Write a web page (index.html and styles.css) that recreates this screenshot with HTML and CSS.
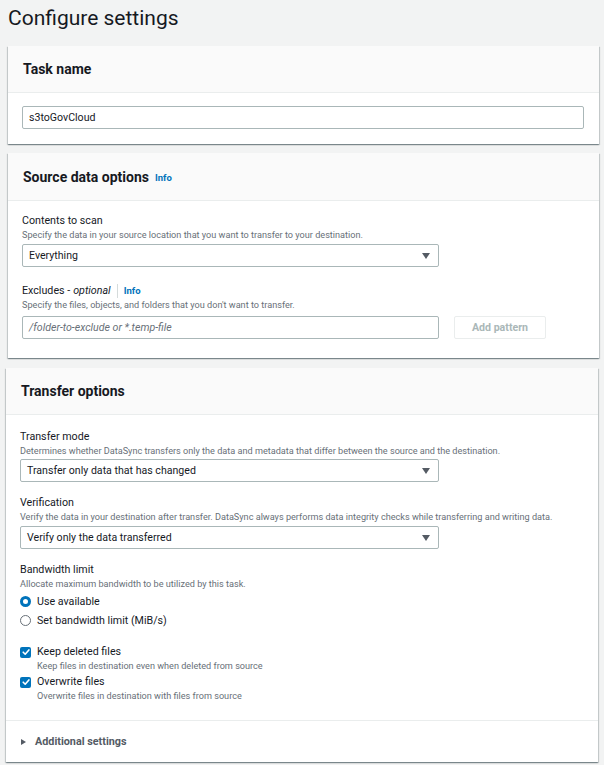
FILE: index.html
```html
<!DOCTYPE html>
<html>
<head>
<meta charset="utf-8">
<link rel="stylesheet" href="styles.css">
</head>
<body>
<div class="page">
  <h1 class="title">Configure settings</h1>

  <section class="card card-task">
    <header class="card-header"><h2>Task name</h2></header>
    <div class="card-body body-task">
      <div class="input full">s3toGovCloud</div>
    </div>
  </section>

  <section class="card card-source">
    <header class="card-header"><h2>Source data options</h2><span class="info">Info</span></header>
    <div class="card-body body-source">
      <div class="label">Contents to scan</div>
      <div class="desc">Specify the data in your source location that you want to transfer to your destination.</div>
      <div class="select">Everything<span class="caret"></span></div>

      <div class="label label-gap">Excludes - <em>optional</em><span class="sep"></span><span class="info info-sm">Info</span></div>
      <div class="desc">Specify the files, objects, and folders that you don't want to transfer.</div>
      <div class="row-input">
        <div class="input placeholder">/folder-to-exclude or *.temp-file</div>
        <div class="btn-disabled">Add pattern</div>
      </div>
    </div>
  </section>

  <section class="card card-transfer">
    <header class="card-header header-transfer"><h2>Transfer options</h2></header>
    <div class="card-body body-transfer">
      <div class="label">Transfer mode</div>
      <div class="desc">Determines whether DataSync transfers only the data and metadata that differ between the source and the destination.</div>
      <div class="select select-wide select-tight">Transfer only data that has changed<span class="caret"></span></div>

      <div class="label label-gap2">Verification</div>
      <div class="desc">Verify the data in your destination after transfer. DataSync always performs data integrity checks while transferring and writing data.</div>
      <div class="select select-wide">Verify only the data transferred<span class="caret"></span></div>

      <div class="label label-gap2">Bandwidth limit</div>
      <div class="desc">Allocate maximum bandwidth to be utilized by this task.</div>
      <div class="radios">
        <div class="radio-row"><span class="radio checked"></span><span class="opt">Use available</span></div>
        <div class="radio-row"><span class="radio"></span><span class="opt">Set bandwidth limit (MiB/s)</span></div>
      </div>

      <div class="checks">
        <div class="check-item">
          <div class="check-row"><span class="checkbox"><svg viewBox="0 0 10 10" width="10" height="10"><path d="M2.2 5.2 L4.2 7.2 L7.9 2.9" fill="none" stroke="#fff" stroke-width="1.6" stroke-linecap="round" stroke-linejoin="round"/></svg></span><span class="opt">Keep deleted files</span></div>
          <div class="check-desc">Keep files in destination even when deleted from source</div>
        </div>
        <div class="check-item second">
          <div class="check-row"><span class="checkbox"><svg viewBox="0 0 10 10" width="10" height="10"><path d="M2.2 5.2 L4.2 7.2 L7.9 2.9" fill="none" stroke="#fff" stroke-width="1.6" stroke-linecap="round" stroke-linejoin="round"/></svg></span><span class="opt">Overwrite files</span></div>
          <div class="check-desc">Overwrite files in destination with files from source</div>
        </div>
      </div>
    </div>
    <footer class="card-footer"><span class="tri"></span><span class="footer-text">Additional settings</span></footer>
  </section>
</div>
</body>
</html>
```
FILE: styles.css
```css
* { box-sizing: border-box; }
html, body { margin: 0; padding: 0; }
body {
  background: #f2f3f3;
  font-family: Roboto, "Liberation Sans", Arial, sans-serif;
  color: #16191f;
  width: 604px;
  height: 765px;
  overflow: hidden;
}
.page { padding-top: 4px; }
.title {
  margin: 0 0 0 8px;
  font-size: 21px;
  font-weight: 400;
  line-height: 28px;
  height: 42px;
  color: #16191f;
}
.card {
  background: #fff;
  box-shadow: 0 1px 1px 0 rgba(0,28,36,.3), 1px 1px 1px 0 rgba(0,28,36,.15), -1px 1px 1px 0 rgba(0,28,36,.15);
}
.card-task { margin: 0 5px 0 8px; }
.card-source { margin: 9px 5px 0 8px; }
.card-transfer { margin: 10px 6px 0 6px; }
.card-header {
  background: #fafafa;
  border-bottom: 1px solid #eaeded;
  height: 47px;
  display: flex;
  align-items: center;
  padding: 0 15px;
}
.card-source .card-header { height: 48px; }
.card-header h2 {
  margin: 0;
  font-size: 14px;
  font-weight: 700;
  line-height: 18px;
}
.info {
  color: #0073bb;
  font-weight: 700;
  font-size: 9.5px;
  margin-left: 6px;
  margin-top: 2px;
}
.card-body { padding: 0 15px 0 14px; }
.body-task { padding-top: 13px; padding-bottom: 15px; }
.body-source { padding-top: 12px; padding-bottom: 19px; }
.body-transfer { padding-top: 14px; padding-bottom: 18px; border-bottom: 1px solid #eaeded; }
.input, .select {
  height: 23px;
  border: 1px solid #aab7b8;
  border-radius: 2px;
  background: #fff;
  font-size: 10.6px;
  line-height: 21px;
  padding: 0 6px;
  color: #16191f;
}
.input.full { width: 100%; }
.select {
  width: 417px;
  margin-top: 3px;
  display: flex;
  justify-content: space-between;
  align-items: center;
}
.select-wide { width: 419px; }
.select-tight { margin-top: 2px; }
.caret {
  width: 0; height: 0;
  border-left: 4px solid transparent;
  border-right: 4px solid transparent;
  border-top: 6px solid #545b64;
  margin-right: 2px;
}
.label {
  font-size: 10.7px;
  line-height: 16px;
  display: flex;
  align-items: center;
}
.label em { font-style: italic; margin-left: 3px; }
.label-gap { margin-top: 16px; }
.label-gap2 { margin-top: 13px; }
.sep {
  display: inline-block;
  width: 1px;
  height: 14px;
  background: #d5dbdb;
  margin-left: 6px;
}
.info-sm { margin-left: 6px; margin-top: 0; }
.desc {
  font-size: 9.15px;
  line-height: 12px;
  color: #687078;
}
.row-input {
  display: flex;
  gap: 15px;
  margin-top: 5px;
}
.row-input .input { width: 417px; }
.placeholder { color: #687078; font-style: italic; }
.btn-disabled {
  width: 92px;
  height: 23px;
  border: 1px solid #eaeded;
  border-radius: 2px;
  color: #aab7b8;
  font-weight: 700;
  font-size: 10.6px;
  display: flex;
  align-items: center;
  justify-content: center;
}
.radios { margin-top: 2px; }
.radio-row {
  height: 19px;
  display: flex;
  align-items: center;
}
.radio {
  width: 11px; height: 11px;
  border-radius: 50%;
  border: 1px solid #687078;
  background: #fff;
}
.radio.checked { border: 3.5px solid #0073bb; }
.opt {
  font-size: 10.7px;
  margin-left: 6px;
  line-height: 16px;
}
.checks { margin-top: 14px; }
.check-item.second { margin-top: 2px; }
.check-row {
  display: flex;
  align-items: center;
  height: 16px;
}
.checkbox {
  width: 11px; height: 11px;
  background: #0073bb;
  border-radius: 2px;
  display: flex;
  align-items: center;
  justify-content: center;
}
.check-desc {
  font-size: 9.15px;
  line-height: 12px;
  color: #687078;
  margin-left: 17px;
}
.card-footer {
  height: 41px;
  display: flex;
  align-items: center;
  padding-left: 15px;
}
.tri {
  width: 0; height: 0;
  border-top: 3.5px solid transparent;
  border-bottom: 3.5px solid transparent;
  border-left: 5px solid #545b64;
}
.footer-text {
  font-weight: 700;
  font-size: 10.8px;
  color: #545b64;
  margin-left: 9px;
}
```
